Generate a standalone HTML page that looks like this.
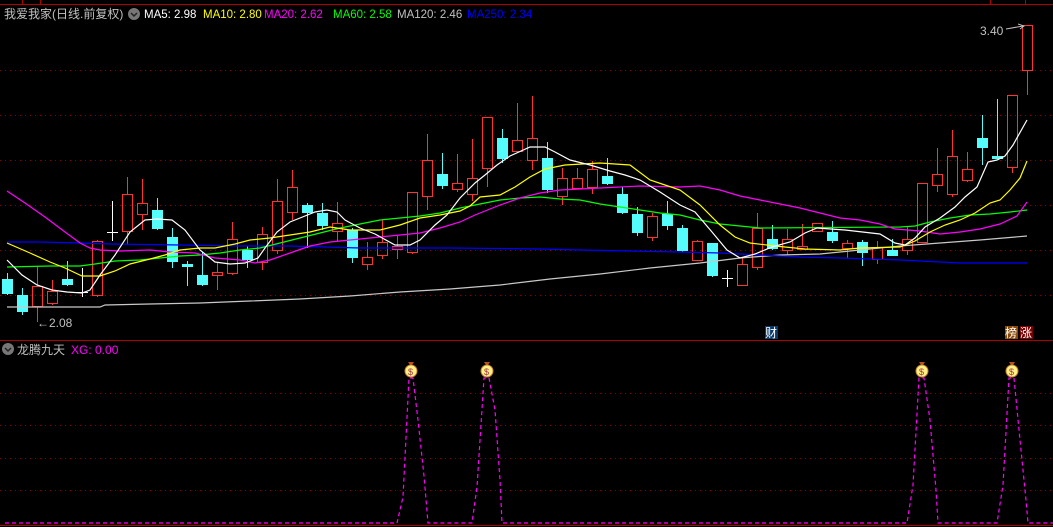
<!DOCTYPE html>
<html><head><meta charset="utf-8"><style>
html,body{margin:0;padding:0;background:#000;width:1053px;height:527px;overflow:hidden}
svg{display:block}
text{font-family:"Liberation Sans","Noto Sans CJK SC",sans-serif;font-size:12px}
.h{font-size:11.5px}
</style></head><body>
<svg width="1053" height="527" viewBox="0 0 1053 527" xmlns="http://www.w3.org/2000/svg">
<rect width="1053" height="527" fill="#000"/>
<path d="M0 4.5H1053M0 340.5H1053M0 525.5H1053" stroke="#b00000" stroke-width="1"/>
<path d="M22.5 0V4M40.5 0V4M990.5 0V4M1025.5 0V4" stroke="#b00000"/>
<g stroke="#8a0000" stroke-dasharray="1 4">
<path d="M0 70.5H1053M0 115.5H1053M0 160.5H1053M0 205.5H1053M0 250.5H1053M0 295.5H1053"/>
<path d="M0 393.5H1053M0 425.5H1053M0 458.5H1053M0 490.5H1053"/>
</g>
<text x="4" y="18" fill="#c0c0c0">我爱我家(日线.前复权)</text>
<circle cx="134" cy="14" r="6" fill="#777"/><path d="M131 13l3 3 3-3" stroke="#222" stroke-width="1.5" fill="none"/>
<text class="h" x="144" y="18" fill="#fff">MA5: 2.98</text>
<text class="h" x="203" y="18" fill="#ffff00">MA10: 2.80</text>
<text class="h" x="264" y="18" fill="#ff00ff">MA20: 2.62</text>
<text class="h" x="333" y="18" fill="#00ff00">MA60: 2.58</text>
<text class="h" x="397" y="18" fill="#c0c0c0">MA120: 2.46</text>
<text class="h" x="467" y="18" fill="#0000ff">MA250: 2.34</text>
<g stroke="#ff3232" fill="none">
<path d="M37.5 266V286M37.5 306V322M52.5 280V291M52.5 303V305M97.5 240V241M97.5 295V297M127.5 177V194M127.5 231V245M142.5 179V203M142.5 214V230M217.5 262V272M217.5 275V290M232.5 222V239M232.5 273V275M262.5 227V234M262.5 262V270M277.5 179V201M277.5 250V254M292.5 170V187M292.5 212V220M337.5 202V223M337.5 231V241M367.5 242V257M367.5 264V270M382.5 220V242M382.5 255V259M397.5 235V246M397.5 249V259M412.5 252V254M427.5 134V160M427.5 196V210M457.5 154V183M457.5 189V192M472.5 139V178M472.5 194V201M487.5 168V187M517.5 103V140M517.5 151V152M532.5 96V138M532.5 160V170M562.5 168V178M562.5 196V205M577.5 168V178M577.5 188V189M592.5 161V169M592.5 187V194M652.5 213V216M652.5 237V241M697.5 240V241M697.5 260V261M742.5 258V264M742.5 285V286M757.5 213V228M757.5 267V270M787.5 229V239M787.5 250V255M802.5 224V246M802.5 249V250M847.5 240V243M847.5 248V258M877.5 241V247M877.5 259V264M907.5 226V239M907.5 250V255M937.5 148V174M937.5 185V192M952.5 130V156M952.5 194V197M967.5 152V169M967.5 180V182M1012.5 167V173M1027.5 70V95"/>
<rect x="32.5" y="286.5" width="10" height="20"/><rect x="47.5" y="291.5" width="10" height="12"/>
<rect x="92.5" y="241.5" width="10" height="54"/><rect x="122.5" y="194.5" width="10" height="37"/>
<rect x="137.5" y="203.5" width="10" height="11"/><rect x="212.5" y="272.5" width="10" height="3"/>
<rect x="227.5" y="239.5" width="10" height="34"/><rect x="257.5" y="234.5" width="10" height="28"/>
<rect x="272.5" y="201.5" width="10" height="49"/><rect x="287.5" y="187.5" width="10" height="25"/>
<rect x="332.5" y="223.5" width="10" height="8"/><rect x="362.5" y="257.5" width="10" height="7"/>
<rect x="377.5" y="242.5" width="10" height="13"/><rect x="392.5" y="246.5" width="10" height="3"/>
<rect x="407.5" y="192.5" width="10" height="60"/><rect x="422.5" y="160.5" width="10" height="36"/>
<rect x="452.5" y="183.5" width="10" height="6"/><rect x="467.5" y="178.5" width="10" height="16"/>
<rect x="482.5" y="117.5" width="10" height="51"/><rect x="512.5" y="140.5" width="10" height="11"/>
<rect x="527.5" y="138.5" width="10" height="22"/><rect x="557.5" y="178.5" width="10" height="18"/>
<rect x="572.5" y="178.5" width="10" height="10"/><rect x="587.5" y="169.5" width="10" height="18"/>
<rect x="647.5" y="216.5" width="10" height="21"/><rect x="692.5" y="241.5" width="10" height="19"/>
<rect x="737.5" y="264.5" width="10" height="21"/><rect x="752.5" y="228.5" width="10" height="39"/>
<rect x="782.5" y="239.5" width="10" height="11"/><rect x="797.5" y="246.5" width="10" height="3"/>
<rect x="812.5" y="223.5" width="10" height="8"/><rect x="842.5" y="243.5" width="10" height="5"/>
<rect x="872.5" y="247.5" width="10" height="12"/><rect x="902.5" y="239.5" width="10" height="11"/>
<rect x="917.5" y="183.5" width="10" height="59"/><rect x="932.5" y="174.5" width="10" height="11"/>
<rect x="947.5" y="156.5" width="10" height="38"/><rect x="962.5" y="169.5" width="10" height="11"/>
<rect x="1007.5" y="95.5" width="10" height="72"/><rect x="1022.5" y="25.5" width="10" height="45"/>
</g>
<g stroke="#54fcfc" fill="#54fcfc">
<path d="M7.5 273V295M22.5 288V315M67.5 261V286M157.5 198V230M172.5 228V268M187.5 261V286M202.5 252V286M247.5 246V268M307.5 203V248M322.5 203V230M352.5 228V263M442.5 153V189M502.5 129V163M547.5 142V193M607.5 158V185M622.5 187V214M637.5 207V236M667.5 201V230M682.5 225V252M712.5 243V277M772.5 225V250M832.5 221V243M862.5 240V266M892.5 239V256M982.5 115V165M997.5 99V158" fill="none"/>
<rect x="2.5" y="279.5" width="10" height="14"/><rect x="17.5" y="295.5" width="10" height="16"/>
<rect x="62.5" y="279.5" width="10" height="5"/><rect x="152.5" y="210.5" width="10" height="18"/>
<rect x="167.5" y="237.5" width="10" height="24"/><rect x="182.5" y="264.5" width="10" height="2"/>
<rect x="197.5" y="275.5" width="10" height="9"/><rect x="242.5" y="250.5" width="10" height="9"/>
<rect x="302.5" y="205.5" width="10" height="7"/><rect x="317.5" y="213.5" width="10" height="12"/>
<rect x="347.5" y="230.5" width="10" height="27"/><rect x="437.5" y="174.5" width="10" height="11"/>
<rect x="497.5" y="138.5" width="10" height="20"/><rect x="542.5" y="158.5" width="10" height="31"/>
<rect x="602.5" y="176.5" width="10" height="7"/><rect x="617.5" y="194.5" width="10" height="18"/>
<rect x="632.5" y="214.5" width="10" height="18"/><rect x="662.5" y="214.5" width="10" height="11"/>
<rect x="677.5" y="228.5" width="10" height="22"/><rect x="707.5" y="243.5" width="10" height="32"/>
<rect x="767.5" y="239.5" width="10" height="9"/><rect x="827.5" y="232.5" width="10" height="8"/>
<rect x="857.5" y="242.5" width="10" height="10"/><rect x="887.5" y="250.5" width="10" height="5"/>
<rect x="977.5" y="138.5" width="10" height="9"/><rect x="992.5" y="156.5" width="10" height="2"/>
</g>
<path d="M82.5 268V297M77 292.5H88M112.5 201V241M107 232.5H118M727.5 270V287M722 278.5H733" stroke="#fff"/>
<g fill="none" stroke-width="1.2">
<polyline stroke="#c8c8c8" points="7,307 100,307 105,305 150,304 200,303 250,301 300,299 350,296 400,292 450,289 500,285 550,279 600,274 650,268 700,263 740,258 780,255 820,254 860,250 900,246 940,243 980,240 1027,236"/>
<polyline stroke="#0000ff" points="7,242 40,242 80,243 110,244 180,245 240,246 290,246 360,248 450,248 540,249 580,250 630,251 680,252 720,253 760,255 800,257 840,258 900,260 960,263 1027,263"/>
<polyline stroke="#00ff00" points="7,267 50,266 80,266 95,264 115,261 140,260 160,258 180,256 200,255 220,253 240,250 260,248 280,243 300,238 320,233 340,228 360,224 380,220 400,218 420,216 440,213 460,208 480,204 500,200 520,198 540,197 560,199 580,200 600,204 620,207 640,210 660,213 680,215 700,220 720,224 760,228 900,227 915,226 930,222 950,218 970,215 990,214 1010,212 1027,210"/>
<polyline stroke="#ff00ff" points="7,191 25,203 45,217 65,232 80,243 90,248 100,250 120,251 150,250 170,252 195,253 215,258 240,260 255,263 270,260 290,253 310,246 330,242 360,239 380,237 400,235 420,233 440,228 460,222 475,215 500,205 520,198 540,193 560,190 600,188 640,186 680,187 700,186 720,190 740,196 760,200 780,204 800,208 820,213 840,218 860,220 880,224 895,229 920,231 940,234 960,232 980,229 1000,224 1017,216 1027,202"/>
<polyline stroke="#ffff00" points="7,243 30,253 50,262 65,268 82,276 100,276 115,271 130,264 150,259 165,255 180,250 200,248 215,248 235,244 250,240 270,238 290,235 310,232 330,227 350,230 380,230 400,225 420,218 440,215 460,211 470,206 480,197 500,195 515,187 530,177 545,169 565,165 600,163 630,165 650,180 665,185 680,190 700,205 720,225 735,237 750,243 775,246 805,249 840,250 860,248 900,247 915,241 930,232 945,225 960,220 975,213 990,203 1000,200 1010,190 1020,178 1027,161"/>
<polyline stroke="#ffffff" points="7,260 22,275 37,285 52,290 67,292 82,293 90,290 100,275 115,255 130,232 145,220 157,219 172,220 185,230 200,250 215,262 230,264 245,263 258,258 265,248 277,232 290,222 300,218 315,212 327,210 337,212 345,220 360,228 375,234 395,245 410,245 420,240 435,225 447,215 460,198 475,183 485,175 497,165 510,156 530,147 545,147 555,152 570,160 590,165 610,171 625,175 640,180 660,192 680,205 695,212 712,232 727,250 740,258 755,254 772,247 790,242 805,233 817,228 845,230 880,234 895,243 905,245 915,238 925,227 940,218 955,207 965,197 977,187 988,162 997,160 1005,156 1013,145 1027,120"/>
</g>
<text x="37" y="327" fill="#c0c0c0">←2.08</text>
<text x="980" y="35" fill="#c0c0c0">3.40</text>
<path d="M1006 29L1023 26M1018 24L1024 26L1020 29" stroke="#c0c0c0" fill="none"/>
<rect x="765" y="326" width="13" height="13" fill="#0a3a6a"/><text x="765" y="337" fill="#fff">财</text>
<rect x="1005" y="326" width="13" height="13" fill="#8b4a0a"/><text x="1005" y="337" fill="#fff">榜</text>
<rect x="1020" y="326" width="13" height="13" fill="#7a0000"/><text x="1020" y="337" fill="#fff">涨</text>
<circle cx="8" cy="349" r="6" fill="#777"/><path d="M5 348l3 3 3-3" stroke="#222" stroke-width="1.5" fill="none"/>
<text x="17" y="354" fill="#c0c0c0">龙腾九天</text>
<text x="71" y="354" fill="#ff00ff">XG: 0.00</text>
<polyline fill="none" stroke="#ff00ff" stroke-width="1.2" stroke-dasharray="4 3" points="5,523 397,523 403,497 409,378 413,378 418,420 424,476 428,523 472,523 477,487 484,378 489,378 495,410 500,480 502,523 907,523 913,485 919,378 924,378 930,420 936,490 938,523 997,523 1003,485 1009,378 1014,378 1020,440 1026,500 1028,523 1053,523"/>
<g>
<g transform="translate(411,370)"><path d="M-3 -8h6l-2 3h-2z" fill="#b85020"/><ellipse cx="0" cy="1" rx="6" ry="6" fill="#fff080" stroke="#c08030"/><text x="-3" y="5" fill="#a03050" style="font-size:9px">$</text></g>
<g transform="translate(487,370)"><path d="M-3 -8h6l-2 3h-2z" fill="#b85020"/><ellipse cx="0" cy="1" rx="6" ry="6" fill="#fff080" stroke="#c08030"/><text x="-3" y="5" fill="#a03050" style="font-size:9px">$</text></g>
<g transform="translate(922,370)"><path d="M-3 -8h6l-2 3h-2z" fill="#b85020"/><ellipse cx="0" cy="1" rx="6" ry="6" fill="#fff080" stroke="#c08030"/><text x="-3" y="5" fill="#a03050" style="font-size:9px">$</text></g>
<g transform="translate(1012,370)"><path d="M-3 -8h6l-2 3h-2z" fill="#b85020"/><ellipse cx="0" cy="1" rx="6" ry="6" fill="#fff080" stroke="#c08030"/><text x="-3" y="5" fill="#a03050" style="font-size:9px">$</text></g>
</g>
</svg>
</body></html>
